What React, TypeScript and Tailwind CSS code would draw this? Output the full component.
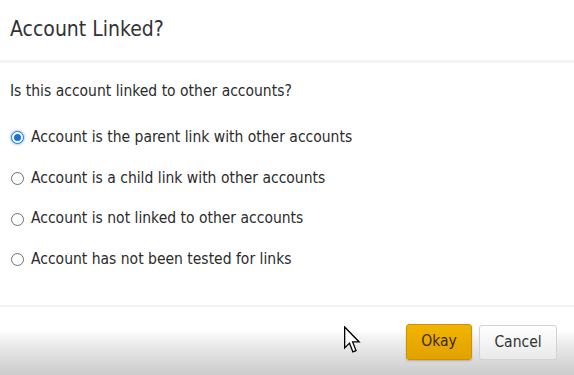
import React from "react";

function Radio({ checked }: { checked?: boolean }) {
  if (checked) {
    return (
      <span className="w-[13px] h-[13px] rounded-full border border-[#1a73e8] bg-white flex items-center justify-center shadow-[0_0_2px_1px_rgba(26,115,232,0.35)]">
        <span className="w-[7px] h-[7px] rounded-full bg-[#1a6fe0]" />
      </span>
    );
  }
  return <span className="w-[13px] h-[13px] rounded-full border border-[#6e6e6e] bg-white" />;
}

const options = [
  { label: "Account is the parent link with other accounts", checked: true, h: "h-[41px]" },
  { label: "Account is a child link with other accounts", h: "h-[41px]" },
  { label: "Account is not linked to other accounts", h: "h-[40px]" },
  { label: "Account has not been tested for links", h: "h-[41px]" },
];

export default function App() {
  return (
    <div
      className="relative w-[574px] h-[375px] bg-white flex flex-col overflow-hidden text-[#2b2b2b]"
      style={{ fontFamily: '"DejaVu Sans Condensed", "DejaVu Sans", sans-serif' }}
    >
      <div className="h-[60px] shrink-0 pl-[10px] flex items-center text-[21px] text-[#333]">
        Account Linked?
      </div>
      <div className="h-[3px] shrink-0 bg-[#f3f3f3]" />
      <div className="h-[242px] shrink-0 flex flex-col pt-[19px] pl-[10px]">
        <div className="h-[20px] flex items-center text-[15.5px]">Is this account linked to other accounts?</div>
        <div className="h-[15px]" />
        {options.map((o) => (
          <div key={o.label} className={`${o.h} flex items-center gap-[7px] pl-[1px] text-[15.5px]`}>
            <Radio checked={o.checked} />
            <span>{o.label}</span>
          </div>
        ))}
      </div>
      <div className="flex-1 flex flex-col">
        <div className="h-[2px] bg-[#f3f3f3]" />
        <div className="flex-1 bg-[linear-gradient(to_bottom,#ffffff_0px,#ffffff_24px,#f4f4f4_30px,#e6e6e6_42px,#dcdcdc_52px,#d3d3d3_60px,#cdcdcd_68px)] flex justify-end items-start pt-[17px] pr-[17px] gap-[7px]">
          <button className="w-[66px] h-[36px] rounded-[3px] border border-[#c99400] bg-[linear-gradient(to_bottom,#f2b400,#e0a200)] text-[#3d2a00] text-[15.5px] shadow-[0_1px_2px_rgba(0,0,0,0.2)]">
            Okay
          </button>
          <button className="w-[78px] h-[35px] mt-[1px] rounded-[3px] border border-[#d2d2d2] bg-[linear-gradient(to_bottom,#ffffff,#e9e9e9)] text-[#333] text-[15.5px]">
            Cancel
          </button>
        </div>
      </div>
      <svg className="absolute left-[344px] top-[326px]" width="17" height="28" viewBox="0 0 13 21">
        <path d="M0.5 0.5 L0.5 16.5 L4.2 12.9 L6.8 19.6 L9.2 18.6 L6.6 12 L11.6 12 Z" fill="white" stroke="black" strokeWidth="1" strokeLinejoin="miter" />
      </svg>
    </div>
  );
}
